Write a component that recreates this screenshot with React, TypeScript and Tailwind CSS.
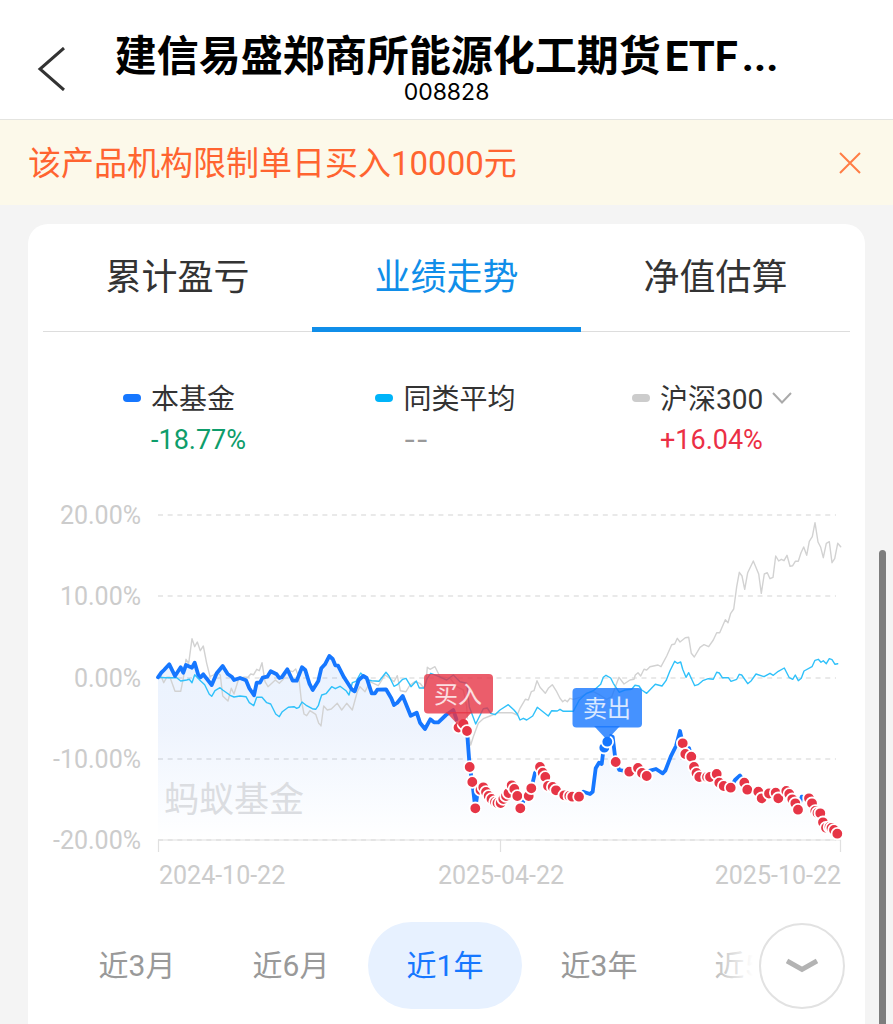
import { useState } from 'react';

type Point = [number, number];

const TABS = ['累计盈亏', '业绩走势', '净值估算'];
const RANGES = ['近3月', '近6月', '近1年', '近3年', '近5年'];

const GRID = [
  { y: 515, label: '20.00%' },
  { y: 596, label: '10.00%' },
  { y: 678, label: '0.00%' },
  { y: 759, label: '-10.00%' },
  { y: 840, label: '-20.00%' },
];

// Samples are stored in thirds of a unit, relative to the origin of their chunk
const chunk = (ox: number, oy: number, pts: Point[]): Point[] =>
  pts.map(([x, y]) => [ox + x / 3, oy + y / 3]);

const toPath = (pts: Point[]) =>
  pts.map(([x, y], i) => `${i ? 'L' : 'M'}${x.toFixed(1)} ${y.toFixed(1)}`).join('');

const FUND: Point[] = [
  [158, 677.3], [161.3, 672.7], [164, 670], [169.3, 664.3], [175, 676], [180.7, 667.3], [183.3, 672.7],
  [186, 665], [192, 667.7], [194.7, 662.7], [198.3, 675], [200.7, 677.3], [203.3, 674.3], [211.7, 685],
  [216.7, 673.3], [222.7, 666], [227.7, 674], [231.7, 676.7], [234, 680], [240, 678], [246, 680.3],
  [249.3, 688.3], [254, 695.3], [256.7, 682.7], [260, 682.7], [262.7, 677.7], [267.3, 676.7], [270.7, 671.3],
  [276.7, 674.3], [279.3, 678], [281.7, 677.3], [287.3, 669.3], [292.7, 680.7], [296.7, 680.7], [302, 667.3],
  [305.3, 670], [309.3, 683.3], [312.7, 690], [318.3, 681], [321.3, 668.3], [325, 664.3], [329.3, 656],
  [332.7, 659], [335.3, 665.3], [338, 665.7], [344, 677.3], [351.7, 689.3], [354.7, 691.3], [358.7, 680],
  [363.3, 676], [366.7, 678], [371.7, 693.3], [375, 693.3], [377.3, 689.7], [386, 689.3], [391.3, 698.3],
  [394, 705], [397.3, 702.7], [402.7, 696], [410.7, 715.7], [416.7, 712.7], [420, 722.7], [425, 729],
  [430.3, 719.3], [434, 722.3], [438.3, 722.3], [446, 715], [453.3, 710], [456.7, 720], [458.5, 727.5],
  [463.5, 724], [467, 731], [469.7, 767], [472.3, 782], [475.3, 808.3], [478, 790], [483.3, 787.3],
  [486, 792], [495, 802.3], [500.7, 803], [506, 796], [511.7, 785.3], [514.3, 789], [517.3, 796],
  [520.3, 808.3], [524, 800], [528.7, 796], [531.3, 788.3], [535, 773], [540, 766.7], [545.3, 777],
  [548, 786], [556, 790.3], [564.3, 795.3], [579, 796.7], [583.3, 791.7], [590, 794], [592.7, 791.7],
  [595.7, 768.3], [599, 762.7], [601.7, 764], [603.7, 748], [607.3, 741.7], [610.7, 736], [612.7, 737],
  [615.7, 762], [619.3, 770], [629.3, 771.7], [638, 767.7], [646.7, 774], [650, 770.7], [656, 769],
  [662.7, 773.3], [665.3, 770.7], [670.7, 756.7], [676, 746], [680, 731], [682.7, 743.3], [685.3, 754],
  [689, 748], [691.3, 756.7], [694, 767], [699.3, 777], [710, 777], [716.7, 774], [719.3, 782.7],
  [730.7, 787.7], [735, 780], [740, 775.5], [744.3, 782.7], [747.3, 789.7], [758.3, 791.7], [761.7, 798.3],
  [770, 793], [775.7, 792.7], [778.3, 798.3], [786.3, 791], [795.3, 803.3], [798, 809.7], [801.7, 796.7],
  [809, 798.3], [812, 803.3], [820.3, 813.3], [826, 827.7], [831, 827.7], [837.3, 833.7],
];

const AVERAGE: Point[] = [
  ...chunk(150, 620, [
    [24, 172], [45, 173], [80, 173], [92, 183], [110, 180], [118, 178], [126, 188], [134, 164], [152, 183],
    [164, 194], [178, 223], [185, 229], [195, 212], [210, 203], [218, 210], [232, 220], [240, 226], [252, 231],
    [270, 228], [288, 230], [298, 248], [311, 257], [320, 232], [336, 232], [350, 248], [362, 252], [377, 282],
    [388, 290], [397, 275], [415, 262], [432, 260], [440, 265], [447, 262], [456, 246], [470, 257], [487, 266],
    [497, 268], [505, 257], [510, 240],
  ]),
  ...chunk(320, 640, [
    [5, 165], [18, 161], [35, 140], [46, 146], [60, 139], [78, 152], [87, 165], [97, 128], [108, 124],
    [122, 99], [134, 111], [145, 120], [155, 122], [177, 124], [190, 107], [198, 97], [207, 108], [222, 139],
    [232, 134], [248, 118], [258, 115], [273, 140], [289, 123], [298, 144], [312, 144], [322, 115], [332, 100],
    [350, 107], [380, 120], [400, 105], [420, 125], [440, 130],
  ]),
  ...chunk(440, 670, [
    [88, 110], [107, 162], [118, 140], [130, 116], [142, 114], [152, 130], [165, 134], [180, 120], [205, 104],
    [222, 120], [232, 132], [240, 150], [250, 145], [260, 150], [278, 138], [292, 112], [325, 138], [335, 122],
    [352, 123],
  ]),
  ...chunk(560, 640, [
    [0, 208], [10, 214], [40, 214], [58, 180], [68, 170], [80, 160], [100, 152], [122, 133], [130, 112],
    [138, 106], [152, 114], [160, 130], [178, 157], [195, 150], [215, 148], [225, 136], [237, 138], [245, 150],
    [260, 160], [286, 133], [306, 138], [318, 122],
  ]),
  ...chunk(670, 640, [
    [0, 92], [14, 64], [22, 70], [32, 66], [38, 88], [48, 112], [56, 98], [74, 137], [84, 134], [98, 122],
    [115, 116], [130, 118], [140, 97], [148, 99], [157, 113], [175, 113], [183, 124], [200, 118], [208, 103],
    [215, 105], [233, 131], [244, 122], [258, 102], [282, 110], [300, 100], [310, 106], [325, 94], [343, 84],
    [358, 113], [368, 118], [376, 105], [385, 122], [394, 115], [402, 93], [426, 80], [435, 61], [445, 58],
    [453, 67], [460, 62], [469, 71], [478, 56], [486, 59], [495, 73], [503, 71],
  ]),
];

const CSI300: Point[] = [
  ...chunk(150, 620, [
    [24, 172], [32, 165], [41, 188], [50, 172], [60, 172], [75, 214], [92, 214], [100, 175], [108, 118],
    [116, 130], [126, 56], [134, 80], [142, 66], [151, 92], [160, 78], [170, 130], [180, 170], [190, 165],
    [200, 158], [211, 165], [218, 228], [234, 243], [244, 205], [252, 222], [265, 180], [280, 172], [294, 172],
    [302, 162], [311, 164], [320, 148], [328, 152], [336, 128], [345, 185], [354, 200], [376, 180], [388, 190],
    [400, 178], [412, 150], [428, 155], [437, 147], [446, 170], [454, 240], [462, 282], [470, 287], [480, 272],
    [497, 283], [506, 310], [512, 316],
  ]),
  ...chunk(320, 640, [
    [3, 258], [11, 198], [22, 210], [34, 207], [52, 190], [65, 210], [80, 190], [97, 210], [112, 155],
    [120, 140], [135, 155], [150, 125], [175, 137], [195, 105], [210, 115], [222, 125], [232, 107], [241, 152],
    [258, 155], [270, 135], [285, 125], [300, 130], [312, 145], [318, 130], [322, 82], [330, 88], [345, 80],
    [360, 110], [390, 115], [410, 140], [430, 150], [440, 200], [445, 280], [452, 315],
  ]),
  ...chunk(440, 670, [
    [100, 200], [115, 160], [130, 146], [150, 138], [175, 128], [215, 128], [232, 135], [240, 115], [256, 88],
    [265, 90], [274, 65], [282, 62], [291, 32], [300, 52], [316, 70], [325, 55], [337, 44], [350, 65],
  ]),
  ...chunk(560, 640, [
    [0, 175], [8, 185], [15, 180], [22, 185], [30, 175], [40, 178], [60, 172], [80, 160], [100, 155],
    [120, 165], [140, 178], [155, 170], [170, 130], [177, 112], [192, 132], [210, 120], [222, 118],
  ]),
  ...chunk(630, 500, [
    [16, 525], [24, 518], [32, 528], [42, 508], [50, 510], [60, 500], [84, 495], [93, 500], [110, 468],
    [125, 434], [134, 432], [142, 415], [150, 426], [166, 413], [176, 412], [184, 460], [193, 471], [210, 442],
    [222, 434], [236, 440], [250, 420], [260, 398], [269, 398], [286, 359], [294, 368], [302, 340], [311, 327],
    [320, 260], [328, 217], [336, 228], [344, 268], [353, 218], [370, 183], [386, 222], [394, 280], [403, 222],
    [412, 218], [420, 236], [429, 232], [437, 168], [446, 183], [454, 178], [462, 182], [471, 166], [480, 199],
    [488, 197], [496, 184], [505, 184], [513, 158], [521, 141], [530, 166], [538, 124], [547, 110], [555, 68],
    [564, 126], [572, 142], [580, 173], [589, 130], [598, 125], [606, 188], [614, 176], [623, 130], [632, 140],
  ]),
];

const BUYS: Point[] = [
  [458.5, 727.5], [463.5, 724], [467, 731], [469.7, 767], [472.3, 782], [475.3, 808.3], [480.5, 790],
  [483.3, 787.3], [486, 792], [488.7, 796], [491.5, 799], [495, 802], [497.5, 803], [500.7, 803],
  [503.3, 799], [506, 796], [508.5, 793], [511.7, 785.3], [514.3, 789], [517.3, 796], [520.3, 808.3],
  [528.7, 796], [531.3, 788.3], [540, 767], [542.7, 772.7], [545.3, 777], [548, 786], [552.7, 787],
  [556, 790.3], [564.3, 795.3], [569.3, 796], [572.3, 796.7], [579, 796.7], [615.7, 762], [629.3, 771.7],
  [638, 768], [642, 773], [646.7, 776], [682.7, 743.3], [685.3, 754], [691.3, 756.7], [694, 767],
  [696.5, 773], [699.3, 777], [707, 777], [710, 777], [716.7, 774], [719.3, 782.7], [723.7, 786],
  [730.7, 787.7], [744.3, 782.7], [747.3, 789.7], [758.3, 791.7], [761.7, 798.3], [769, 793.5],
  [775.7, 792.7], [778.3, 798.3], [786.3, 791], [789.3, 794], [792.3, 799.3], [795.3, 803.3], [798, 809.7],
  [809, 798.3], [812, 803.3], [815.3, 811], [817.5, 813], [820.3, 813.3], [823, 822.3], [826, 827.7],
  [829.5, 827], [831.5, 828], [834, 830], [837.3, 833.7],
];

const SELLS: Point[] = [[604.3, 747.7], [607.3, 741.7]];

function PerformanceChart() {
  const fundPath = toPath(FUND);

  return (
    <svg viewBox="28 490 837 400" className="block w-full" role="img" aria-label="业绩走势">
      <defs>
        <linearGradient id="fund-area" x1="0" y1="656" x2="0" y2="840" gradientUnits="userSpaceOnUse">
          <stop offset="0" stopColor="#1677ff" stopOpacity="0.09" />
          <stop offset="0.4" stopColor="#1660e8" stopOpacity="0.07" />
          <stop offset="1" stopColor="#1677ff" stopOpacity="0" />
        </linearGradient>
      </defs>

      {/* Grid and axes */}
      {GRID.map(({ y, label }) => (
        <g key={label}>
          <line x1="158" x2="836" y1={y} y2={y} stroke="#e2e2e2" strokeWidth="1.5" strokeDasharray="5 4.67" />
          <text x="141" y={y + 9} textAnchor="end" className="fill-[#cccccc] text-[25px]">
            {label}
          </text>
        </g>
      ))}
      <path d="M158.5 852V840H840.5V852M500.5 840V852" fill="none" stroke="#e0e0e0" strokeWidth="1.2" />
      <g className="fill-[#cccccc] text-[25px]">
        <text x="159" y="884">2024-10-22</text>
        <text x="501" y="884" textAnchor="middle">2025-04-22</text>
        <text x="841" y="884" textAnchor="end">2025-10-22</text>
      </g>

      <path d={`${fundPath}V840H158Z`} fill="url(#fund-area)" />
      <text x="164" y="812" className="fill-[#dbdde1] text-[35px]">蚂蚁基金</text>

      {/* Series */}
      <g fill="none" strokeLinejoin="round" strokeLinecap="round">
        <path d={toPath(CSI300)} stroke="#d2d2d2" strokeWidth="1.4" />
        <path d={toPath(AVERAGE)} stroke="#2fc1fa" strokeWidth="1.4" />
        <path d={fundPath} stroke="#1677ff" strokeWidth="3.8" />
      </g>

      {/* Trades */}
      <g stroke="#ffffff" strokeWidth="1.8">
        {BUYS.map(([x, y]) => (
          <circle key={x} cx={x} cy={y} r="5.8" fill="#e63546" />
        ))}
        {SELLS.map(([x, y]) => (
          <circle key={x} cx={x} cy={y} r="5.8" fill="#1677ff" />
        ))}
      </g>
      <g fill="#e63546" fillOpacity="0.8">
        <rect x="424" y="674" width="69" height="39.5" rx="4" />
        <path d="M446 712H472L459 726Z" />
      </g>
      <g fill="#1677ff" fillOpacity="0.8">
        <rect x="572.5" y="688" width="69.5" height="39.5" rx="4" />
        <path d="M594 726H620L607 740Z" />
      </g>
      <g className="fill-white/80 text-[24px]" textAnchor="middle">
        <text x="458" y="703">买入</text>
        <text x="607" y="717">卖出</text>
      </g>
    </svg>
  );
}

function Legend() {
  return (
    <div className="flex justify-between pt-12 pr-[58px] pl-20 text-[28px] leading-10 text-[#333333]">
      <div className="flex min-w-[136px] gap-[10px]">
        <span className="mt-[14px] h-2 w-[18px] rounded-full bg-[#1677ff]" />
        <div>
          <div>本基金</div>
          <div className="text-[27px] text-[#0e9d6b]">-18.77%</div>
        </div>
      </div>
      <div className="flex min-w-[136px] gap-[10px]">
        <span className="mt-[14px] h-2 w-[18px] rounded-full bg-[#00b4f9]" />
        <div>
          <div>同类平均</div>
          <div className="font-[Inter,sans-serif] text-[27px] text-[#999999]">--</div>
        </div>
      </div>
      <div className="flex min-w-[136px] gap-[10px]">
        <span className="mt-[14px] h-2 w-[18px] rounded-full bg-[#cccccc]" />
        <div>
          <div className="flex items-center gap-2">
            <select aria-label="对比指数" className="h-10 appearance-none bg-transparent outline-none">
              <option>沪深300</option>
            </select>
            <svg viewBox="0 0 20 12" className="mb-1 h-3 w-5 flex-none" fill="none" stroke="#aaaaaa" strokeWidth="2">
              <path d="M1 1L10 10.5L19 1" />
            </svg>
          </div>
          <div className="text-[27px] text-[#eb2f45]">+16.04%</div>
        </div>
      </div>
    </div>
  );
}

export default function App() {
  const [tab, setTab] = useState(TABS[1]);
  const [range, setRange] = useState(RANGES[2]);
  const [showNotice, setShowNotice] = useState(true);

  return (
    <div className="relative flex min-h-screen flex-col bg-[#f4f4f4] font-[Roboto,'Noto_Sans_CJK_SC',sans-serif]">
      <header className="flex items-center border-b border-[#e4e4e0] bg-white pt-[34px] pr-9 pb-[15px] pl-9">
        <button type="button" aria-label="返回" className="flex-none">
          <svg viewBox="0 0 32 44" className="h-11 w-8" fill="none" stroke="#333333" strokeWidth="3">
            <path d="M28 1L4 22L28 43" />
          </svg>
        </button>
        <div className="min-w-0 flex-1 pr-8 text-center text-black">
          <h1 className="text-[42px] leading-[46px] font-bold whitespace-nowrap">
            建信易盛郑商所能源化工期货<span className="mx-1">ETF</span>...
          </h1>
          <p className="font-[Inter,sans-serif] text-[23px] leading-6">008828</p>
        </div>
      </header>

      {showNotice && (
        <div className="flex h-[85px] items-center justify-between bg-[#fcf9ea] pr-8 pl-7 text-[#ff6430]">
          <p className="pt-0.5 text-[33px] leading-10">该产品机构限制单日买入10000元</p>
          <button type="button" aria-label="关闭" onClick={() => setShowNotice(false)}>
            <svg viewBox="0 0 22 22" className="h-[22px] w-[22px]" fill="none" stroke="#ff7d45" strokeWidth="2">
              <path d="M1 1L21 21M21 1L1 21" />
            </svg>
          </button>
        </div>
      )}

      <main className="mx-7 mt-[19px] flex-1 rounded-t-[20px] bg-white pb-4">
        <div role="tablist" className="mx-[15px] flex h-[108px] border-b border-[#dddddd]">
          {TABS.map((name) => (
            <button
              key={name}
              type="button"
              role="tab"
              aria-selected={tab === name}
              onClick={() => setTab(name)}
              className={`-mb-px flex-1 border-b-[5px] pt-1 text-[36px] ${
                tab === name ? 'border-[#108ee9] text-[#108ee9]' : 'border-transparent text-[#333333]'
              }`}
            >
              {name}
            </button>
          ))}
        </div>

        <div className="px-[15px]">
          <Legend />
        </div>

        <div className="mt-[30px]">
          <PerformanceChart />
        </div>

        {/* Time range */}
        <div className="relative mt-8 overflow-hidden pl-8">
          <div className="flex">
            {RANGES.map((name) => (
              <button
                key={name}
                type="button"
                onClick={() => setRange(name)}
                className={`h-[87px] w-[154px] flex-none rounded-full text-[30px] ${
                  range === name ? 'bg-[#e7f1ff] text-[#1677ff]' : 'text-[#999999]'
                }`}
              >
                {name}
              </button>
            ))}
          </div>
          <div className="absolute inset-y-0 right-0 flex w-40 items-center justify-end bg-linear-to-r from-white/20 to-white to-30% pr-5">
            <button
              type="button"
              aria-label="更多"
              className="flex h-[86px] w-[86px] items-center justify-center rounded-full border-2 border-[#e2e2e2] bg-white"
            >
              <svg viewBox="0 0 32 16" className="h-4 w-8" fill="none" stroke="#b3b3b3" strokeWidth="5">
                <path d="M1 3L16 11.5L31 3" />
              </svg>
            </button>
          </div>
        </div>
      </main>

      <div className="absolute top-[550px] right-[7px] bottom-0 w-[7px] rounded-t-full bg-[#7d7d7d]" />
    </div>
  );
}
